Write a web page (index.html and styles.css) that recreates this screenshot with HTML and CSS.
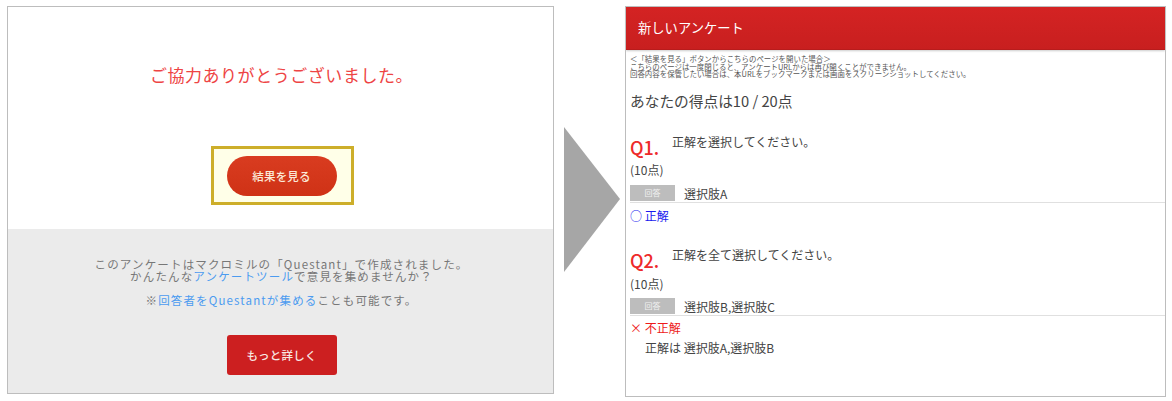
FILE: index.html
```html
<!DOCTYPE html>
<html lang="ja">

<head>
    <meta charset="UTF-8">
    <meta name="viewport" content="width=device-width, initial-scale=1.0">
    <title>Questant</title>
    <link rel="stylesheet" href="styles.css">
</head>

<body>
    <div class="wrap">
        <div class="panel thanks">
            <div class="thanks-top">
                <p class="thanks-title">ご協力ありがとうございました。</p>
                <div class="highlight">
                    <a class="btn-result">結果を見る</a>
                </div>
            </div>
            <div class="thanks-bottom">
                <p class="promo">このアンケートはマクロミルの「Questant」で作成されました。<br>かんたんな<a class="link">アンケートツール</a>で意見を集めませんか？</p>
                <p class="promo-note">※<a class="link">回答者をQuestantが集める</a>ことも可能です。</p>
                <a class="btn-more">もっと詳しく</a>
            </div>
        </div>

        <svg class="arrow" width="56" height="145" viewBox="0 0 56 145">
            <polygon points="0,0 56,72 0,145" fill="#a6a6a6" />
        </svg>

        <div class="panel result">
            <div class="result-head">新しいアンケート</div>
            <div class="result-body">
                <p class="notice">＜「結果を見る」ボタンからこちらのページを開いた場合＞<br>こちらのページは一度閉じると、アンケートURLからは再び開くことができません。<br>回答内容を保管したい場合は、本URLをブックマークまたは画面をスクリーンショットしてください。</p>
                <p class="score">あなたの得点は10 / 20点</p>

                <div class="question">
                    <span class="q-no">Q1.</span>
                    <span class="q-text">正解を選択してください。</span>
                </div>
                <p class="points">(10点)</p>
                <div class="answer">
                    <span class="answer-tag">回答</span>
                    <span>選択肢A</span>
                </div>
                <p class="verdict ok">○ 正解</p>

                <div class="question second">
                    <span class="q-no">Q2.</span>
                    <span class="q-text">正解を全て選択してください。</span>
                </div>
                <p class="points second-points">(10点)</p>
                <div class="answer second-answer">
                    <span class="answer-tag">回答</span>
                    <span>選択肢B,選択肢C</span>
                </div>
                <p class="verdict ng">× 不正解</p>
                <p class="correct">正解は 選択肢A,選択肢B</p>
            </div>
        </div>
    </div>
</body>

</html>
```

FILE: styles.css
```css
* {
    box-sizing: border-box;
}

body {
    margin: 0;
    background: #fff;
    font-family: "Noto Sans CJK JP", "Noto Sans", sans-serif;
    color: #444;
}

p {
    margin: 0;
}

.wrap {
    display: flex;
    align-items: flex-start;
    height: 401px;
    padding: 6px 0 0 7px;
}

.panel {
    border: 1px solid #bdbdbd;
    background: #fff;
}

.thanks {
    width: 547px;
    height: 388px;
    display: flex;
    flex-direction: column;
}

.thanks-top {
    height: 222px;
    display: flex;
    flex-direction: column;
    align-items: center;
}

.thanks-title {
    margin-top: 55px;
    margin-left: 2px;
    font-size: 17px;
    line-height: 25px;
    letter-spacing: 0.55px;
    color: #ee4444;
}

.highlight {
    margin-top: 59px;
    margin-left: 4px;
    width: 143px;
    height: 59px;
    border: 3px solid #cdae2a;
    background: #ffffe8;
    display: flex;
    align-items: center;
    justify-content: center;
}

.btn-result {
    width: 110px;
    height: 40px;
    margin-right: 2px;
    border-radius: 20px;
    background: linear-gradient(#d93c20, #cf3216);
    color: #fbe9d8;
    font-size: 11.5px;
    font-weight: 500;
    letter-spacing: 0.2px;
    display: flex;
    align-items: center;
    justify-content: center;
}

.thanks-bottom {
    flex: 1;
    background: #ebebeb;
    display: flex;
    flex-direction: column;
    align-items: center;
    padding: 29px 0 0 2px;
    color: #777;
    font-size: 11.5px;
    letter-spacing: 1.15px;
}

.promo {
    line-height: 12px;
    text-align: center;
}

.promo-note {
    margin-top: 10px;
    line-height: 16px;
}

.link {
    color: #4c9bf0;
}

.btn-more {
    margin-top: 27px;
    width: 110px;
    height: 40px;
    border-radius: 3px;
    background: #cc1f20;
    color: #f8e8e4;
    font-weight: 500;
    letter-spacing: 0.2px;
    display: flex;
    align-items: center;
    justify-content: center;
}

.arrow {
    margin: 121px 5px 0 10px;
    flex: none;
}

.result {
    width: 541px;
    height: 391px;
}

.result-head {
    height: 43px;
    background: linear-gradient(#d42323, #c81f1f);
    border-bottom: 1px solid #b81c1c;
    box-shadow: 0 1px 2px #ccc;
    color: #fff;
    font-size: 13.3px;
    line-height: 42px;
    padding-left: 12px;
}

.result-body {
    padding: 5px 0 0 4px;
}

.notice {
    font-size: 7.45px;
    line-height: 7.5px;
    color: #555;
}

.score {
    margin-top: 12px;
    font-size: 14.7px;
    line-height: 22px;
    color: #444;
}

.question {
    margin-top: 15px;
    display: flex;
    align-items: flex-start;
    height: 34px;
}

.question.second {
    margin-top: 16px;
}

.q-no {
    width: 42px;
    color: #ee2a2a;
    font-size: 18px;
    font-weight: 500;
    line-height: 34px;
    padding-top: 3px;
}

.q-text {
    font-size: 12px;
    line-height: 18px;
    padding-top: 6px;
}

.points {
    font-size: 12px;
    line-height: 18px;
}

.second-points {
    margin-top: 1px;
}

.answer {
    margin-top: 6px;
    display: flex;
    align-items: center;
    height: 18px;
    border-bottom: 1px solid #e0e0e0;
    font-size: 12px;
}

.second-answer {
    margin-top: 5px;
}

.answer-tag {
    width: 45px;
    height: 16px;
    margin-right: 9px;
    background: #bdbdbd;
    color: #f2f2f2;
    font-size: 8px;
    line-height: 16px;
    text-align: center;
}

.verdict {
    margin-top: 4px;
    font-size: 12px;
    line-height: 17px;
}

.ok {
    color: #1a1aee;
}

.ng {
    margin-top: 3px;
    color: #ee1a1a;
}

.correct {
    margin-top: 3px;
    padding-left: 15px;
    font-size: 12px;
    line-height: 18px;
}
```
